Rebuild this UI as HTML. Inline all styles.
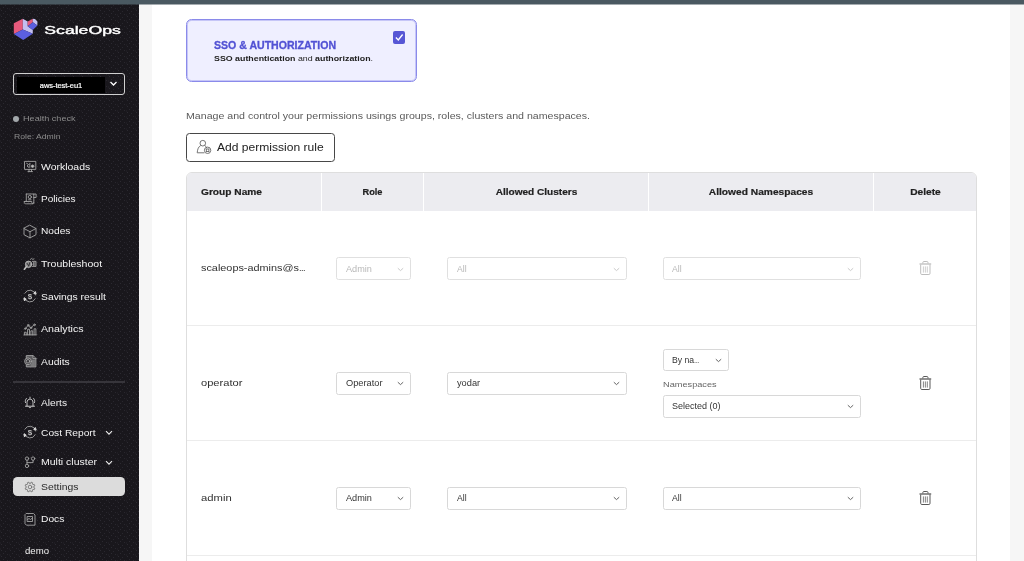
<!DOCTYPE html>
<html><head><meta charset="utf-8">
<style>
*{box-sizing:border-box;margin:0;padding:0}
html,body{width:1024px;height:561px;overflow:hidden;background:#f6f6f6;font-family:"Liberation Sans",sans-serif;}
#wrap{position:absolute;left:0;top:0;width:1024px;height:561px;will-change:transform}
.abs{position:absolute}
#top{position:absolute;left:0;top:0;width:1024px;height:5px;background:linear-gradient(#4a5961 0,#4a5961 4px,rgba(74,89,97,.5) 4px);z-index:5}
#side{position:absolute;left:0;top:4px;width:139px;height:557px;background:#19171c;color:#fff}
#main{position:absolute;left:152px;top:4px;width:858px;height:557px;background:#fff}
.nav{position:absolute;left:41.200px;font-size:10px;color:#f4f4f4;white-space:nowrap;line-height:12px}
.ico{position:absolute;left:22.300px;width:16px;height:16px;overflow:visible}
.ico *{fill:none;stroke:#a4a4a4;stroke-width:.9;stroke-linecap:round;stroke-linejoin:round}
.sel{position:absolute;border:1px solid #d8d8d8;border-radius:2.500px;background:#fff;font-size:8.500px;color:#333;letter-spacing:.35px}
.sel span{position:absolute;left:8.500px;top:50%;white-space:nowrap;line-height:10px;margin-top:-5px}
.sel svg{position:absolute;right:5.800px;top:50%;margin-top:-2px;width:7px;height:5px}
i{font-style:normal;letter-spacing:-.45px;font-size:.85em}
.dis{color:#b8b8b8}
.dis.sel{border-color:#e0e0e0}
.th{position:absolute;top:0;height:38px;line-height:38px;font-size:9.500px;font-weight:bold;color:#222;-webkit-text-stroke:.2px #222;text-align:center;white-space:nowrap}
.gn{position:absolute;left:13.500px;letter-spacing:.28px;font-size:10.500px;color:#303030;white-space:nowrap;line-height:12px}
.rowline{position:absolute;left:0;width:790px;height:1px;background:#ececec}
.trash{position:absolute;left:732px;width:14px;height:16px}
.trash *{fill:none;stroke:#585858;stroke-width:1}
.trash.d *{stroke:#bdbdbd}
</style></head><body>
<div id="wrap">
<div id="top"></div>
<div id="side">
  <svg class="abs" style="left:0;top:0" width="139" height="557"><defs><pattern id="dots" width="9" height="6" patternUnits="userSpaceOnUse"><rect x="1" y="0" width="1" height="1" fill="#2c2a31"/><rect x="5" y="1" width="1" height="1" fill="#29272e"/><rect x="3" y="3" width="1" height="1" fill="#2c2a31"/><rect x="7" y="4" width="1" height="1" fill="#29272e"/><rect x="0" y="4.500" width="1" height="1" fill="#25232a"/></pattern></defs><rect width="139" height="557" fill="url(#dots)"/></svg>
    <!-- logo (coords are page coords minus side offset: y-4) -->
  <svg class="abs" style="left:0;top:0" width="60" height="44" viewBox="0 4 60 44">
    <polygon points="13.800,23.200 22.800,18.700 22.800,29.600 13.800,34.100" fill="#e75a7c"/>
    <polygon points="22.800,18.700 27.700,21.400 27.700,26.200 32.800,30 32.800,33.800 22.800,29.600" fill="#c3bff0"/>
    <polygon points="27.700,21.400 32.800,18.800 32.800,22.300 27.700,26.200" fill="#e75a7c"/>
    <polygon points="32.800,18.800 35,19 37.400,21.500 37.400,25.600 32.800,22.300" fill="#c3bff0"/>
    <polygon points="32.800,22.300 37.400,25.600 32.800,30 27.700,26.200" fill="#5b5fe0"/>
    <polygon points="13.800,34.100 22.800,29.600 32.800,33.800 23.200,39.900" fill="#5b5fe0"/>
  </svg>
  <svg class="abs" style="left:40px;top:14px" width="90" height="24" viewBox="0 0 90 24"><text x="4.300" y="16.200" textLength="76.500" lengthAdjust="spacingAndGlyphs" style="font:11.600px 'Liberation Sans',sans-serif;fill:#fff;stroke:#fff;stroke-width:.4px">ScaleOps</text></svg>
  <!-- cluster select -->
  <div class="abs" style="left:13px;top:69px;width:112px;height:22px;border:1px solid #d0d0d0;border-radius:3px"></div>
  <div class="abs" style="left:17px;top:73px;width:88px;height:16px;background:#000;color:#fff;font-size:7.500px;text-align:center;line-height:18px;letter-spacing:-.05px;-webkit-text-stroke:.2px #fff">aws-test-eu1</div>
  <svg class="abs" style="left:109px;top:77px" width="9" height="6" viewBox="0 0 9 6"><path d="M1.500 1 L4.500 4 L7.500 1" fill="none" stroke="#fff" stroke-width="1.3"/></svg>
  <div class="abs" style="left:13px;top:112px;width:6px;height:6px;border-radius:3px;background:#a3a8ab"></div>
  <div class="abs" style="left:23px;top:110px;color:#8c8c8c;white-space:nowrap;font-size:8.1px;letter-spacing:0px;transform-origin:0 50%;transform:scaleX(1.124)">Health check</div>
  <div class="abs" style="left:13.500px;top:128px;color:#8c8c8c;white-space:nowrap;font-size:8.1px;letter-spacing:0px;transform-origin:0 50%;transform:scaleX(1.0655)">Role: Admin</div>

  <!-- nav icons: each svg viewBox in local 16x16, positioned so that center matches -->
  <!-- Workloads: monitor, page bbox x 23.9-36.2, y 160.9-172 -->
  <svg class="ico" style="top:154px" viewBox="0 0 16 16"><rect x="2.900" y="3.400" width="10.900" height="8"/><path d="M6 13.600h4.500M7 11.400v2.200M9.500 11.400v2.200M4.600 5.300l2 1.200-1.600 1.500 2 1.500M7.800 5.300v4"/><circle cx="10.600" cy="8.200" r="1.250" style="fill:#c4c4c4"/></svg>
  <!-- Policies: scroll x 23.9-36.2 y 193.5-204.4 ; svg top=187-4 -->
  <svg class="ico" style="top:186px" viewBox="0 0 16 16"><path d="M4.300 4v7.500M4.300 4h7.500v9.500M11.800 4h2.300v3.500h-2.300M2.300 11.500h7.500v1c0 1.400 2 1.400 2 0M2.300 11.500v1c0 1.300 1.300 1.300 2 1.300h6.500"/><circle cx="7.800" cy="7" r="1.600"/><path d="M6.500 9.800h2.600"/></svg>
  <!-- Nodes cube: x 23.9-36.2,y 225.1-237.2 -->
  <svg class="ico" style="top:219px" viewBox="0 0 16 16"><path d="M8 2.300l6 3.200v6.200l-6 3.200-6-3.200V5.500zM2 5.500l6 3.200 6-3.200M8 8.700v6.200"/></svg>
  <!-- Troubleshoot -->
  <svg class="ico" style="top:252px" viewBox="0 0 16 16"><circle cx="6.600" cy="8.300" r="3.200" style="fill:#8c8c8c;stroke:#b8b8b8"/><path d="M5 7.300l1.500 2.200M7.800 6.600l-1 3.400" style="stroke:#2a282d;stroke-width:.9"/><path d="M4.300 10.800L2.400 13.200" style="stroke-width:1.700;stroke:#bdbdbd"/><path d="M8.500 3.300l1.200-.8 1.100.9 1.200-.5M10.300 5.400h3.700v5h-3.600M11.600 6.500v3M12.900 6.500v3"/></svg>
  <!-- Savings -->
  <svg class="ico" style="top:284px" viewBox="0 0 16 16"><path d="M2.400 9.500a5.800 5.800 0 0 0 10.800 1.300M13.600 7a5.800 5.800 0 0 0-10.800-1.800"/><path d="M12 5.200l1.300-1.700 .8 2.200zM4 11.300l-1.500 1.600-.6-2.300z" style="fill:#e0e0e0;stroke:#e0e0e0"/><text x="8" y="11" text-anchor="middle" style="font:bold 8px 'Liberation Sans',sans-serif;fill:#bdbdbd;stroke:none">$</text></svg>
  <!-- Analytics -->
  <svg class="ico" style="top:317px" viewBox="0 0 16 16"><path d="M2.400 13.800v-2.600h1.800v2.600M5.600 13.800V8.300h1.900v5.500M8.900 13.800V9.800h1.800v4M12.100 13.800V7.800h1.800v6M2 13.900h12.300"/><path d="M3.500 7.500L6 4.500l2.800 2.300 3.300-3"/><circle cx="3.300" cy="7.600" r=".8"/><circle cx="6.200" cy="4.200" r=".8"/><circle cx="9" cy="6.800" r=".8"/><circle cx="12.500" cy="3.800" r=".8"/></svg>
  <!-- Audits -->
  <svg class="ico" style="top:349px" viewBox="0 0 16 16"><path d="M4.300 4.800V2.600h6.800l2.800 2.800v8.500H4.300v-2.200M11 2.600v3h3" style="fill:#5a595c"/><circle cx="6" cy="8.300" r="3.400" style="fill:#3a383c"/><circle cx="6" cy="8.300" r="1.800"/><path d="M10 8h2.500M10 10h2.500M9 12h3.500"/></svg>
  <!-- Alerts -->
  <svg class="ico" style="top:391px" viewBox="0 0 16 16"><path d="M3.400 11.200h9.200M5 11.200V7.400c0-4.400 6-4.400 6 0v3.800M6.900 12.100c.3 1 1.900 1 2.200 0M8 2.100v1.200M3.500 7.600c-.6-1.700 0-3.200 1-4.100M12.500 7.600c.6-1.700 0-3.200-1-4.100" style="stroke:#d6d6d6"/></svg>
  <!-- Cost report -->
  <svg class="ico" style="top:420px" viewBox="0 0 16 16"><path d="M2.400 9.500a5.800 5.800 0 0 0 10.800 1.300M13.600 7a5.800 5.800 0 0 0-10.800-1.800"/><path d="M12 5.200l1.300-1.700 .8 2.200zM4 11.300l-1.500 1.600-.6-2.300z" style="fill:#e0e0e0;stroke:#e0e0e0"/><text x="8" y="11" text-anchor="middle" style="font:bold 8px 'Liberation Sans',sans-serif;fill:#bdbdbd;stroke:none">$</text></svg>
  <!-- Multi cluster -->
  <svg class="ico" style="top:450px" viewBox="0 0 16 16"><circle cx="5" cy="4.600" r="1.700"/><circle cx="11.100" cy="4.600" r="1.700"/><circle cx="5" cy="11.900" r="1.700"/><path d="M5 6.300v3.900M11.100 6.300v2.300H5"/></svg>
  <!-- Settings pill -->
  <div class="abs" style="left:13px;top:473px;width:112px;height:19px;border-radius:4.500px;background:#dcdcdc"></div>
  <svg class="ico" style="top:474.500px" viewBox="0 0 16 16"><path d="M8.56 4.24L9.13 3.13L10.65 3.76L10.26 4.94L11.06 5.74L12.24 5.35L12.87 6.87L11.76 7.44L11.76 8.56L12.87 9.13L12.24 10.65L11.06 10.26L10.26 11.06L10.65 12.24L9.13 12.87L8.56 11.76L7.44 11.76L6.87 12.87L5.35 12.24L5.74 11.06L4.94 10.26L3.76 10.65L3.13 9.13L4.24 8.56L4.24 7.44L3.13 6.87L3.76 5.35L4.94 5.74L5.74 4.94L5.35 3.76L6.87 3.13L7.44 4.24Z" style="stroke:#6a6a6a;stroke-width:.8"/><circle cx="8" cy="8" r="1.800" style="stroke:#6a6a6a;stroke-width:.8"/></svg>
  <!-- Docs -->
  <svg class="ico" style="top:507px" viewBox="0 0 16 16"><path d="M4.500 2.500h7l1.500 1.500v10.200H4.500L3 12.700V4z"/><path d="M5.500 5.500h5v5h-5zM5.500 8.500l1.500-1 1.500 1 2-1.500"/></svg>

  <div class="nav" style="top:156.500px;font-size:9.4px;letter-spacing:0px;transform-origin:0 50%;transform:scaleX(1.115)">Workloads</div>
  <div class="nav" style="top:188.500px;font-size:9.4px;letter-spacing:0px;transform-origin:0 50%;transform:scaleX(1.0708)">Policies</div>
  <div class="nav" style="top:221px;font-size:9.4px;letter-spacing:0px;transform-origin:0 50%;transform:scaleX(1.0845)">Nodes</div>
  <div class="nav" style="top:254px;font-size:9.4px;letter-spacing:0px;transform-origin:0 50%;transform:scaleX(1.1237)">Troubleshoot</div>
  <div class="nav" style="top:286.500px;font-size:9.4px;letter-spacing:0px;transform-origin:0 50%;transform:scaleX(1.102)">Savings result</div>
  <div class="nav" style="top:319px;font-size:9.4px;letter-spacing:0px;transform-origin:0 50%;transform:scaleX(1.1355)">Analytics</div>
  <div class="nav" style="top:351.500px;font-size:9.4px;letter-spacing:0px;transform-origin:0 50%;transform:scaleX(1.1012)">Audits</div>
  <div class="abs" style="left:13px;top:377px;width:112px;height:2px;background:#37353b"></div>
  <div class="nav" style="top:392.500px;font-size:9.4px;letter-spacing:0px;transform-origin:0 50%;transform:scaleX(1.0847)">Alerts</div>
  <div class="nav" style="top:422.500px;font-size:9.4px;letter-spacing:0px;transform-origin:0 50%;transform:scaleX(1.0913)">Cost Report</div>
  <svg class="abs" style="left:105px;top:426px" width="8" height="6" viewBox="0 0 8 6"><path d="M1 1.200L4 4.200L7 1.200" fill="none" stroke="#eee" stroke-width="1.100"/></svg>
  <div class="nav" style="top:452px;font-size:9.4px;letter-spacing:0px;transform-origin:0 50%;transform:scaleX(1.1197)">Multi cluster</div>
  <svg class="abs" style="left:105px;top:456px" width="8" height="6" viewBox="0 0 8 6"><path d="M1 1.200L4 4.200L7 1.200" fill="none" stroke="#eee" stroke-width="1.100"/></svg>
  <div class="nav" style="top:476.500px;color:#2a2a2a;font-size:9.4px;letter-spacing:0px;transform-origin:0 50%;transform:scaleX(1.107)">Settings</div>
  <div class="nav" style="top:508.500px;font-size:9.4px;letter-spacing:0px;transform-origin:0 50%;transform:scaleX(1.0909)">Docs</div>
  <div class="abs" style="left:25px;top:541.500px;color:#f2f2f2;white-space:nowrap;font-size:8.6px;letter-spacing:0px;transform-origin:0 50%;transform:scaleX(1.1163)">demo</div>
</div>
<div id="main">
  <!-- SSO card -->
  <div class="abs" style="left:34px;top:15px;width:231px;height:63px;border:1px solid #8a8aea;border-radius:5.500px;background:#efefff;box-shadow:inset 0 0 0 1px rgba(138,138,234,.4)"></div>
  <div class="abs" style="left:62px;top:35px;line-height:13px;font-weight:bold;color:#5252d4;-webkit-text-stroke:.3px #5252d4;white-space:nowrap;font-size:10.2px;letter-spacing:0px;transform-origin:0 50%;transform:scaleX(1.0364)">SSO &amp; AUTHORIZATION</div>
  <div class="abs" style="left:62px;top:50px;line-height:10px;color:#222;white-space:nowrap;font-size:7.6px;letter-spacing:0px;transform-origin:0 50%;transform:scaleX(1.1628)"><b>SSO authentication</b> and <b>authorization</b>.</div>
  <div class="abs" style="left:240.500px;top:27px;width:12.500px;height:12.500px;border-radius:2px;background:#5656d5"></div>
  <svg class="abs" style="left:240.500px;top:27px" width="12.500" height="12.500" viewBox="0 0 13 13"><path d="M3 6.800 L5.500 9.300 L10 3.600" fill="none" stroke="#fff" stroke-width="1.400"/></svg>

  <div class="abs" style="left:34px;top:106px;line-height:13px;color:#5a5a5a;white-space:nowrap;font-size:9.3px;letter-spacing:0px;transform-origin:0 50%;transform:scaleX(1.1413)">Manage and control your permissions usings groups, roles, clusters and namespaces.</div>
  <div class="abs" style="left:34px;top:129px;width:149px;height:28.500px;border:1px solid #474747;border-radius:3.500px;background:#fff"></div>
  <svg class="abs" style="left:43px;top:135px" width="18" height="16" viewBox="0 0 18 16"><g fill="none" stroke="#666" stroke-width=".9"><circle cx="7.800" cy="4.200" r="2.800"/><path d="M9.800 6.500c1 .6 1.700 1.500 2 2.500M5.700 6.500C3.500 7.800 2.500 10 2.200 13.800h7.200"/><circle cx="12.600" cy="11.300" r="3.200"/><rect x="11.300" y="10" width="2.600" height="2.600"/></g></svg>
  <div class="abs" style="left:65px;top:137px;line-height:14px;color:#222;white-space:nowrap;font-size:10.4px;letter-spacing:0px;transform-origin:0 50%;transform:scaleX(1.1609)">Add permission rule</div>

  <!-- table -->
  <div class="abs" id="tbl" style="left:34px;top:168px;width:791px;height:400px;border:1px solid #dedede;border-radius:6px 6px 0 0;overflow:hidden;background:#fff">
    <div class="abs" style="left:0;top:0;width:790px;height:38px;background:#ececf0"></div>
    <div class="abs" style="left:134px;top:0;width:1px;height:38px;background:#fff"></div>
    <div class="abs" style="left:236px;top:0;width:1px;height:38px;background:#fff"></div>
    <div class="abs" style="left:461px;top:0;width:1px;height:38px;background:#fff"></div>
    <div class="abs" style="left:686px;top:0;width:1px;height:38px;background:#fff"></div>
    <div class="th" style="left:14px;text-align:left;font-size:9.2px;letter-spacing:0px;transform-origin:0 50%;transform:scaleX(1.1063)">Group Name</div>
    <div class="th" style="left:135px;width:101px;font-size:9.2px;letter-spacing:0px;transform-origin:50% 50%;transform:scaleX(1.0039)">Role</div>
    <div class="th" style="left:238px;width:223px;font-size:9.2px;letter-spacing:0px;transform-origin:50% 50%;transform:scaleX(1.096)">Allowed Clusters</div>
    <div class="th" style="left:462px;width:224px;font-size:9.2px;letter-spacing:0px;transform-origin:50% 50%;transform:scaleX(1.111)">Allowed Namespaces</div>
    <div class="th" style="left:687px;width:103px;font-size:9.2px;letter-spacing:0px;transform-origin:50% 50%;transform:scaleX(1.1096)">Delete</div>
    <div class="rowline" style="top:152px"></div>
    <div class="rowline" style="top:267px"></div>
    <div class="rowline" style="top:382px"></div>

    <div class="gn" style="top:89px;font-size:9.8px;letter-spacing:0px;transform-origin:0 50%;transform:scaleX(1.108)">scaleops-admins@s<i>...</i></div>
    <div class="gn" style="top:204px;font-size:9.8px;letter-spacing:0px;transform-origin:0 50%;transform:scaleX(1.1342)">operator</div>
    <div class="gn" style="top:319px;font-size:9.8px;letter-spacing:0px;transform-origin:0 50%;transform:scaleX(1.1504)">admin</div>

    <div class="sel dis" style="left:149px;top:84.300px;width:74.500px;height:22.500px"><span style="font-size:8.3px;letter-spacing:0px;transform-origin:0 50%;transform:scaleX(1.1007)">Admin</span><svg viewBox="0 0 7 5"><path d="M.8 1.200L3.500 3.600L6.200 1.200" fill="none" stroke="#c4c4c4" stroke-width=".9"/></svg></div>
    <div class="sel dis" style="left:260px;top:84.300px;width:179.500px;height:22.500px"><span style="font-size:8.3px;letter-spacing:0px;transform-origin:0 50%;transform:scaleX(1.0396)">All</span><svg viewBox="0 0 7 5"><path d="M.8 1.200L3.500 3.600L6.200 1.200" fill="none" stroke="#c4c4c4" stroke-width=".9"/></svg></div>
    <div class="sel dis" style="left:475.500px;top:84.300px;width:198px;height:22.500px"><span style="font-size:8.3px;letter-spacing:0px;transform-origin:0 50%;transform:scaleX(1.0396)">All</span><svg viewBox="0 0 7 5"><path d="M.8 1.200L3.500 3.600L6.200 1.200" fill="none" stroke="#c4c4c4" stroke-width=".9"/></svg></div>
    <svg class="trash d" style="top:87px" viewBox="0 0 14 16"><path d="M.5 4h11.700" style="stroke-width:1.300"/><path d="M3.800 3.400V2.600c0-.7.500-1.100 1.100-1.100h3c.6 0 1.100.4 1.100 1.100v.8M1.700 4.600v8.800c0 .7.400 1.100 1.100 1.100h7.100c.7 0 1.100-.4 1.100-1.100V4.600"/><path d="M4.400 6.400v6.200M6.350 6.400v6.200M8.300 6.400v6.200" style="stroke-width:.75"/></svg>

    <div class="sel" style="left:149px;top:199px;width:74.500px;height:22.500px"><span style="font-size:8.3px;letter-spacing:0px;transform-origin:0 50%;transform:scaleX(1.1176)">Operator</span><svg viewBox="0 0 7 5"><path d="M.8 1.200L3.500 3.600L6.200 1.200" fill="none" stroke="#555" stroke-width=".9"/></svg></div>
    <div class="sel" style="left:260px;top:199px;width:179.500px;height:22.500px"><span style="font-size:8.3px;letter-spacing:0px;transform-origin:0 50%;transform:scaleX(1.1124)">yodar</span><svg viewBox="0 0 7 5"><path d="M.8 1.200L3.500 3.600L6.200 1.200" fill="none" stroke="#555" stroke-width=".9"/></svg></div>
    <div class="sel" style="left:475.500px;top:176px;width:66px;height:21.500px"><span style="font-size:8.3px;letter-spacing:0px;transform-origin:0 50%;transform:scaleX(1.0408)">By na<i>...</i></span><svg viewBox="0 0 7 5"><path d="M.8 1.200L3.500 3.600L6.200 1.200" fill="none" stroke="#555" stroke-width=".9"/></svg></div>
    <div class="abs" style="left:475.500px;top:207px;color:#666;white-space:nowrap;font-size:8.1px;letter-spacing:0px;transform-origin:0 50%;transform:scaleX(1.1365)">Namespaces</div>
    <div class="sel" style="left:475.500px;top:222px;width:198px;height:22.500px"><span style="font-size:8.3px;letter-spacing:0px;transform-origin:0 50%;transform:scaleX(1.0842)">Selected (0)</span><svg viewBox="0 0 7 5"><path d="M.8 1.200L3.500 3.600L6.200 1.200" fill="none" stroke="#555" stroke-width=".9"/></svg></div>
    <svg class="trash" style="top:202px" viewBox="0 0 14 16"><path d="M.5 4h11.700" style="stroke-width:1.300"/><path d="M3.800 3.400V2.600c0-.7.500-1.100 1.100-1.100h3c.6 0 1.100.4 1.100 1.100v.8M1.700 4.600v8.800c0 .7.400 1.100 1.100 1.100h7.100c.7 0 1.100-.4 1.100-1.100V4.600"/><path d="M4.400 6.400v6.200M6.350 6.400v6.200M8.300 6.400v6.200" style="stroke-width:.75"/></svg>

    <div class="sel" style="left:149px;top:314px;width:74.500px;height:22.500px"><span style="font-size:8.3px;letter-spacing:0px;transform-origin:0 50%;transform:scaleX(1.1007)">Admin</span><svg viewBox="0 0 7 5"><path d="M.8 1.200L3.500 3.600L6.200 1.200" fill="none" stroke="#555" stroke-width=".9"/></svg></div>
    <div class="sel" style="left:260px;top:314px;width:179.500px;height:22.500px"><span style="font-size:8.3px;letter-spacing:0px;transform-origin:0 50%;transform:scaleX(1.0396)">All</span><svg viewBox="0 0 7 5"><path d="M.8 1.200L3.500 3.600L6.200 1.200" fill="none" stroke="#555" stroke-width=".9"/></svg></div>
    <div class="sel" style="left:475.500px;top:314px;width:198px;height:22.500px"><span style="font-size:8.3px;letter-spacing:0px;transform-origin:0 50%;transform:scaleX(1.0396)">All</span><svg viewBox="0 0 7 5"><path d="M.8 1.200L3.500 3.600L6.200 1.200" fill="none" stroke="#555" stroke-width=".9"/></svg></div>
    <svg class="trash" style="top:317px" viewBox="0 0 14 16"><path d="M.5 4h11.700" style="stroke-width:1.300"/><path d="M3.800 3.400V2.600c0-.7.500-1.100 1.100-1.100h3c.6 0 1.100.4 1.100 1.100v.8M1.700 4.600v8.800c0 .7.400 1.100 1.100 1.100h7.100c.7 0 1.100-.4 1.100-1.100V4.600"/><path d="M4.400 6.400v6.200M6.350 6.400v6.200M8.300 6.400v6.200" style="stroke-width:.75"/></svg>
  </div>
</div>
</div>
</body></html>
